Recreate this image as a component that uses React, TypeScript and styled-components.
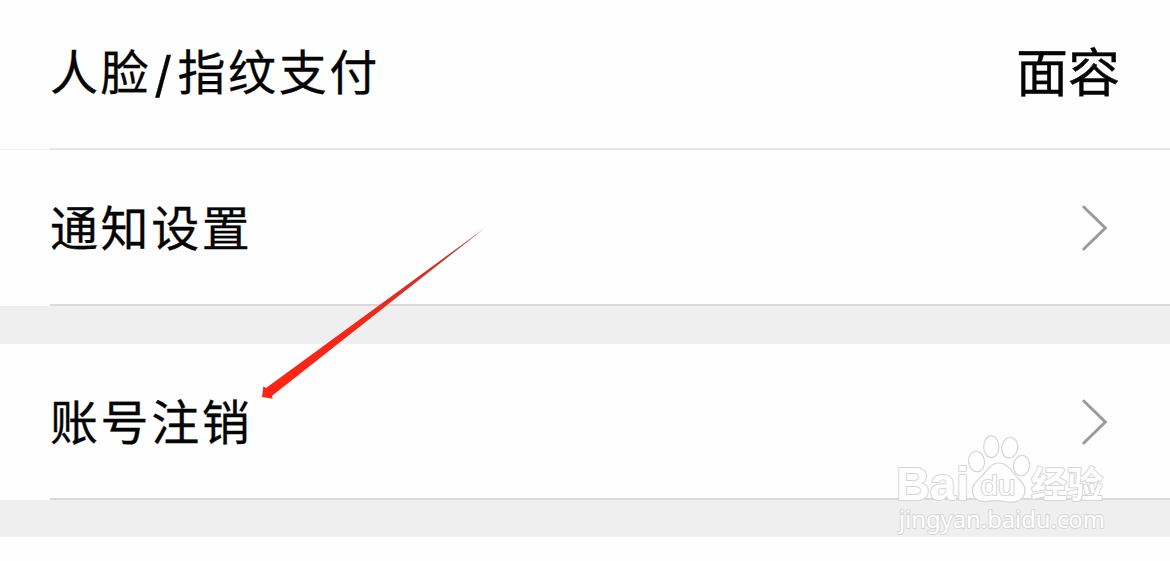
import styled, { createGlobalStyle } from "styled-components"

type Item = {
  label: string;
  value?: string;
}

const groups: Item[][] = [
  [{label: '人脸/指纹支付', value: '面容'}, {label: '通知设置'}],
  [{label: '账号注销'}],
]

const Chevron = () => (
  <svg width="28" height="48" viewBox="0 0 28 48" fill="none">
    <path d="M3.8 4 L25.3 25 L3.8 46" stroke="#9b9b9b" strokeWidth="3" strokeLinecap="round" strokeLinejoin="miter"/>
  </svg>
)

const Arrow = () => (
  <svg width="226" height="174" viewBox="260 226 226 174">
    <defs>
      <linearGradient id="arrowFill" gradientUnits="userSpaceOnUse" x1="265" y1="395" x2="485" y2="228">
        <stop offset="0" stopColor="#ff2414"/>
        <stop offset=".5" stopColor="#f0281c"/>
        <stop offset="1" stopColor="#b03c32"/>
      </linearGradient>
    </defs>
    <path fill="url(#arrowFill)" d="M485.5 227.5 L271.8 396 L272.8 398.8 L262 397 L263.4 386.2 L266 388 Z"/>
  </svg>
)

const Logo = () => (
  <svg width="220" height="108" viewBox="890 430 220 108">
    <g fill="#fff" stroke="#d6d6d6" strokeWidth="1.2">
      <ellipse cx="976.5" cy="461.5" rx="8" ry="10.3" transform="rotate(-8 976.5 461.5)"/>
      <ellipse cx="991.3" cy="446.7" rx="7.6" ry="10.8"/>
      <ellipse cx="1009.7" cy="447.7" rx="8" ry="10.3" transform="rotate(10 1009.7 447.7)"/>
      <ellipse cx="1021.5" cy="465.7" rx="8" ry="10.3" transform="rotate(6 1021.5 465.7)"/>
      <path d="M999 463 C991 463 987 470 983 475 C978 480 972 484 972.5 491 C973 499 979 502 986 501.5 C991 500.5 994 500.5 999 500.7 C1004 500.7 1006 502.5 1011 502.3 C1019 502 1025 498 1025 490 C1025 483 1019 480 1015 475 C1011 470 1007 463 999 463 Z"/>
    </g>
    <LogoText x="896" y="499.5" $size={46} $weight={700} textLength="73" lengthAdjust="spacingAndGlyphs">Bai</LogoText>
    <LogoText x="980.5" y="495" $size={27} $weight={400} textLength="35" lengthAdjust="spacingAndGlyphs">du</LogoText>
    <LogoText x="1031" y="497.5" $size={36} $weight={700} textLength="72" lengthAdjust="spacingAndGlyphs">经验</LogoText>
    <LogoText x="899" y="527.5" $size={24} $weight={400} $family="Noto Sans" textLength="206" lengthAdjust="spacingAndGlyphs">jingyan.baidu.com</LogoText>
  </svg>
)

export default function App(){
  return(
    <Page>
      <GlobalStyle/>
      {groups.map((items, i)=>(
        <Group key={i}>
          {items.map((item, j)=>(
            <Row key={item.label}>
              <Content $last={j === items.length - 1}>
                <Label>
                  {item.label.split('/').map((part, k)=>(
                    <span key={part}>{k > 0 && <Slash>/</Slash>}{part}</span>
                  ))}
                </Label>
                {item.value ? <Value>{item.value}</Value> : <Chevron/>}
              </Content>
            </Row>
          ))}
        </Group>
      ))}
      <ArrowMark><Arrow/></ArrowMark>
      <Watermark><Logo/></Watermark>
    </Page>
  )
}

const GlobalStyle = createGlobalStyle`
  *{
    box-sizing: border-box;
  }
  body{
    margin: 0;
    background: #fefefe;
  }
`

const Page = styled.main`
  position: relative;
  width: 1170px;
  height: 561px;
  overflow: hidden;
  background: #fefefe;
  color: #050505;
  font-family: "Noto Sans CJK SC", sans-serif;
`

const Group = styled.section`
  border-bottom: 38px solid #efefef;
  & + &{
    border-bottom-width: 37px;
  }
`

const Row = styled.div`
  padding-left: 50px;
  height: 156px;
  &:first-child:not(:last-child){
    height: 150px;
    box-shadow: inset 0 -1px #f3f3f3;
  }
  &:first-child:not(:last-child) > div{
    padding-bottom: 5px;
  }
`

const Content = styled.div<{$last: boolean}>`
  display: flex;
  align-items: center;
  justify-content: space-between;
  height: 100%;
  padding-right: 62px;
  border-bottom: 2px solid ${({$last})=>$last ? '#d9d9d9' : '#e6e6e6'};
`

const Label = styled.span`
  padding-bottom: 5px;
  font-size: 48px;
  line-height: 70px;
  letter-spacing: 2.6px;
  -webkit-text-stroke: .3px #050505;
`

const Slash = styled.span`
  margin: 0 3px 0 3px;
  font-family: Inter, sans-serif;
  font-size: 49px;
  vertical-align: -2px;
  line-height: 1;
`

const Value = styled.span`
  padding-bottom: 3px;
  font-size: 52px;
  line-height: 70px;
  letter-spacing: 0;
  margin-right: -12px;
  -webkit-text-stroke: .4px #050505;
`

const ArrowMark = styled.div`
  position: absolute;
  left: 260px;
  top: 226px;
  line-height: 0;
`

const Watermark = styled.div`
  position: absolute;
  left: 890px;
  top: 430px;
  line-height: 0;
`

const LogoText = styled.text<{$size: number; $weight: number; $family?: string}>`
  font-family: ${({$family})=>$family ? `"${$family}"` : '"Liberation Sans"'}, "Noto Sans CJK SC", sans-serif;
  font-size: ${({$size})=>$size}px;
  font-weight: ${({$weight})=>$weight};
  fill: #fff;
  stroke: #d6d6d6;
  stroke-width: 2px;
  stroke-linejoin: round;
  paint-order: stroke;
`
